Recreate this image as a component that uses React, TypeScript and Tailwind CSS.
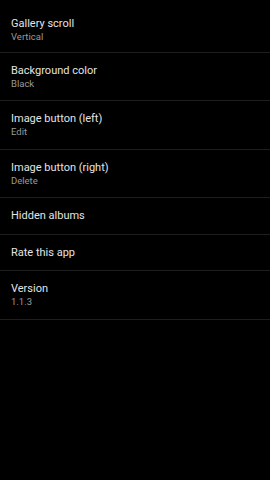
import React from 'react';

interface SettingItem {
  title: string;
  summary?: string;
}

const items: SettingItem[] = [
  { title: 'Gallery scroll', summary: 'Vertical' },
  { title: 'Background color', summary: 'Black' },
  { title: 'Image button (left)', summary: 'Edit' },
  { title: 'Image button (right)', summary: 'Delete' },
  { title: 'Hidden albums' },
  { title: 'Rate this app' },
  { title: 'Version', summary: '1.1.3' },
];

const App: React.FC = () => {
  return (
    <div className="min-h-[480px] w-full bg-black" style={{ fontFamily: 'Roboto, "Noto Sans", sans-serif' }}>
      <div className="pt-[5.5px]">
        {items.map((item) => (
          <div
            key={item.title}
            className="border-b border-[#1e1e1e] px-[11px] pt-[10px] pb-[10.5px] first:pb-[9px]"
          >
            <div className="text-[11px] leading-[15px] text-[#e4e4e4]">{item.title}</div>
            {item.summary && (
              <div className="text-[9.5px] leading-[12px] text-[#9a9a9a]">{item.summary}</div>
            )}
          </div>
        ))}
      </div>
    </div>
  );
};

export default App;
